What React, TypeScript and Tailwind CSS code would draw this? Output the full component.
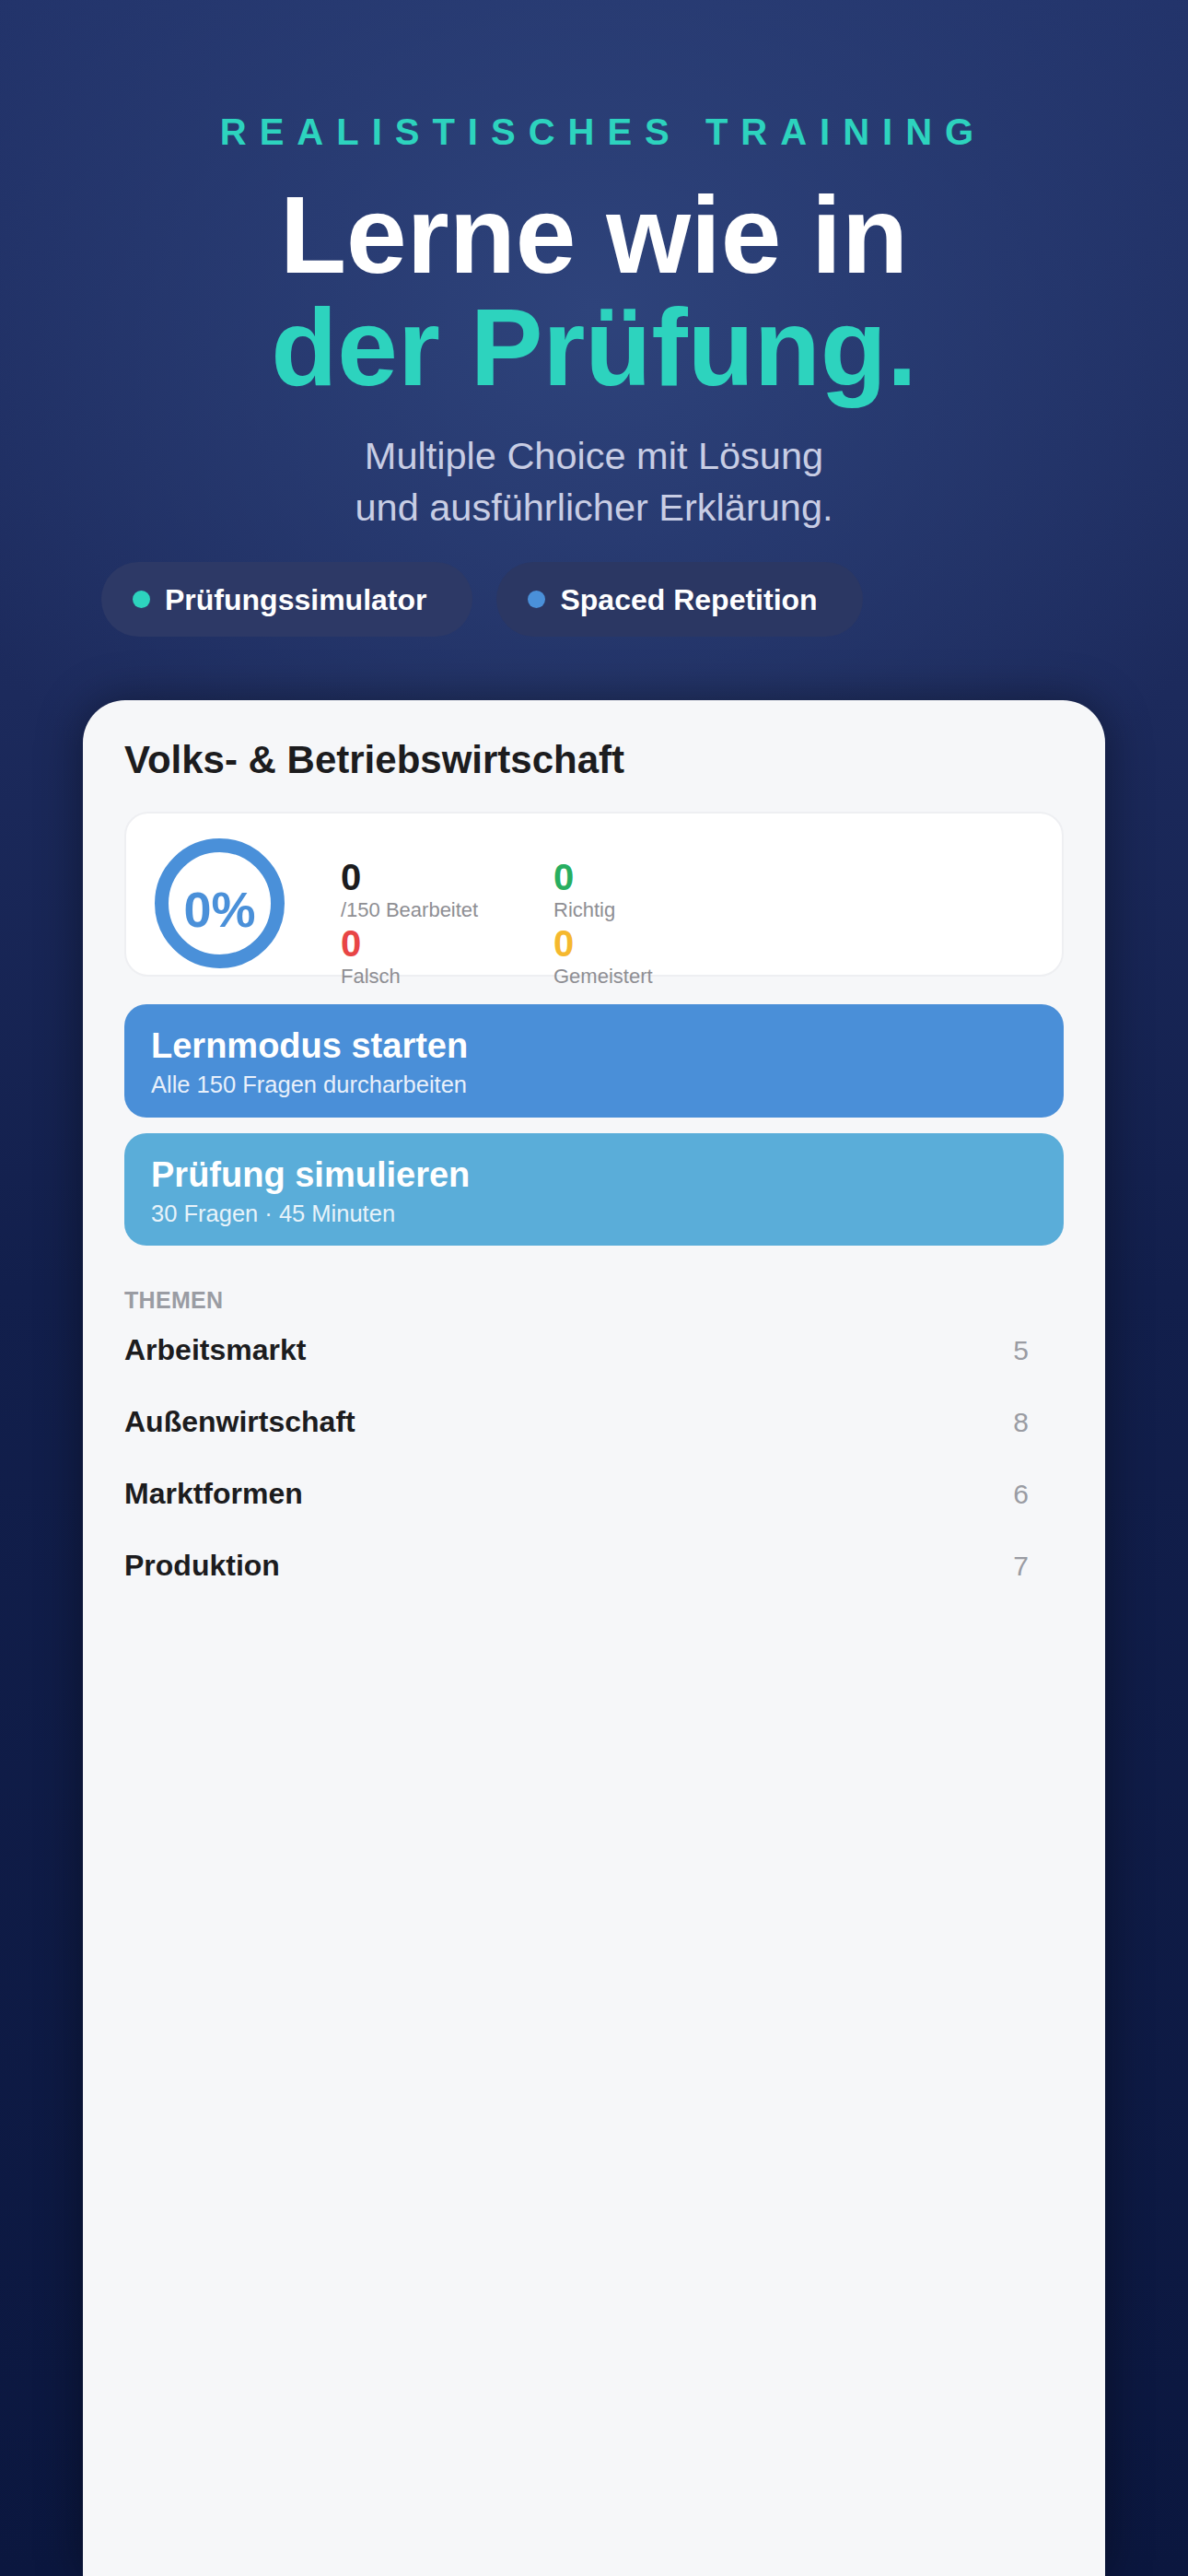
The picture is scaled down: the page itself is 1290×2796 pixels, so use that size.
import React from "react";

const topics = [
  { name: "Arbeitsmarkt", count: 5 },
  { name: "Außenwirtschaft", count: 8 },
  { name: "Marktformen", count: 6 },
  { name: "Produktion", count: 7 },
];

function Stat({ value, label, color }: { value: string; label: string; color: string }) {
  return (
    <div className="flex flex-col">
      <div className={`text-[40px] leading-[48px] font-bold ${color}`}>{value}</div>
      <div className="text-[22px] leading-[24px] text-[#8e8e93]">{label}</div>
    </div>
  );
}

export default function App() {
  return (
    <div className="w-[1290px] h-[2796px] overflow-hidden flex flex-col font-['Liberation_Sans',Arial,sans-serif] bg-[radial-gradient(ellipse_60%_25%_at_50%_12%,#2e437b_0%,rgba(46,67,123,0)_100%),linear-gradient(180deg,#22336a_0%,#1c2a5c_27%,#121f4c_50%,#0b173f_100%)]">
      <div className="pt-[119px] flex flex-col items-center text-center">
        <div className="pl-[20px] text-[40px] leading-[48px] font-bold tracking-[14px] text-[#2dd3be]">
          REALISTISCHES TRAINING
        </div>
        <h1 className="mt-[27px] text-[118px] leading-[122px] font-bold text-white">
          Lerne wie in
          <br />
          <span className="text-[#2dd3be]">der Prüfung.</span>
        </h1>
        <p className="mt-[29px] text-[41.5px] leading-[56px] text-[#c8cde4]">
          Multiple Choice mit Lösung
          <br />
          und ausführlicher Erklärung.
        </p>
      </div>

      <div className="mt-[31px] flex gap-[26px] pl-[110px]">
        <div className="h-[81px] rounded-full bg-[#2d3966] flex items-center pl-[34px] pr-[50px] gap-[16px]">
          <span className="w-[19px] h-[19px] rounded-full bg-[#2dd3be]" />
          <span className="text-[32px] font-bold text-white">Prüfungssimulator</span>
        </div>
        <div className="h-[81px] rounded-full bg-[#2b3763] flex items-center pl-[34px] pr-[49px] gap-[16px]">
          <span className="w-[19px] h-[19px] rounded-full bg-[#4a90d9]" />
          <span className="text-[32px] font-bold text-white">Spaced Repetition</span>
        </div>
      </div>

      <div className="mt-[69px] mx-[90px] flex-1 rounded-t-[46px] bg-[#f6f7f9] shadow-[0_0_50px_rgba(0,0,0,0.4)] px-[45px] pt-[40px]">
        <h2 className="text-[42px] leading-[50px] font-bold text-[#1c1c1e]">Volks- &amp; Betriebswirtschaft</h2>

        <div className="mt-[31px] h-[179px] rounded-[26px] bg-white border-2 border-[#eeeff2] flex items-start pl-[31px] pt-[27px]">
          <div className="w-[141px] h-[141px] shrink-0 rounded-full border-[15px] border-[#4a90d9] bg-white flex items-center justify-center pt-[12px]">
            <span className="text-[54px] font-bold text-[#4a90d9] leading-none">0%</span>
          </div>
          <div className="ml-[61px] mt-[18px] grid grid-cols-[231px_231px]">
            <Stat value="0" label="/150 Bearbeitet" color="text-[#1c1c1e]" />
            <Stat value="0" label="Richtig" color="text-[#27ae60]" />
            <Stat value="0" label="Falsch" color="text-[#e84545]" />
            <Stat value="0" label="Gemeistert" color="text-[#f5b82e]" />
          </div>
        </div>

        <div className="mt-[30px] flex flex-col gap-[17px]">
          <div className="h-[123px] rounded-[24px] bg-[#4a8fd8] pl-[29px] pt-[22px] text-white">
            <div className="text-[38px] leading-[46px] font-bold">Lernmodus starten</div>
            <div className="mt-[4px] text-[25.5px] leading-[30px] text-[#e8f0fb]">Alle 150 Fragen durcharbeiten</div>
          </div>
          <div className="h-[122px] rounded-[24px] bg-[#5aadd9] pl-[29px] pt-[22px] text-white">
            <div className="text-[38px] leading-[46px] font-bold">Prüfung simulieren</div>
            <div className="mt-[4px] text-[25.5px] leading-[30px] text-[#e8f3fa]">30 Fragen · 45 Minuten</div>
          </div>
        </div>

        <div className="mt-[44px] text-[25px] leading-[30px] font-bold text-[#9a9ca3] tracking-[0.3px]">THEMEN</div>
        <div className="flex flex-col">
          {topics.map((t) => (
            <div key={t.name} className="h-[78px] flex items-center justify-between pr-[38px]">
              <span className="text-[32px] font-bold text-[#1c1c1e]">{t.name}</span>
              <span className="text-[30px] text-[#9a9ca3]">{t.count}</span>
            </div>
          ))}
        </div>
      </div>
    </div>
  );
}
